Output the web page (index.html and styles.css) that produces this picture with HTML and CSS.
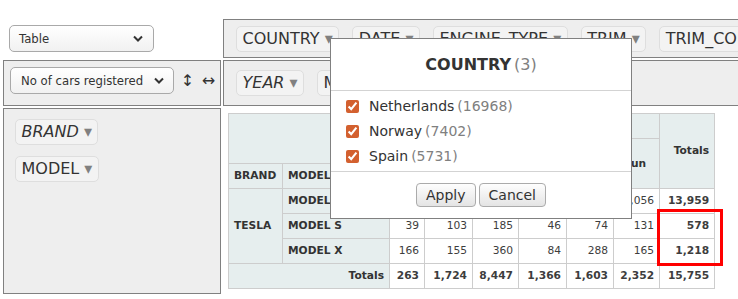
FILE: index.html
```
<!DOCTYPE html>
<html lang="en">
<head>
<meta charset="utf-8"/>
<title>Pivot Table</title>
<link rel="stylesheet" href="styles.css">
</head>
<body>
<div class="pivot-ui">
  <div class="renderer-cell">
    <div class="select renderer-select">
      <span>Table</span>
      <svg width="10" height="7" viewBox="0 0 10 7"><path d="M1 1.5 L5 5.5 L9 1.5" fill="none" stroke="#333" stroke-width="2"/></svg>
    </div>
  </div>
  <div class="axis-box unused">
    <span class="attr">COUNTRY<span class="triangle"> ▾</span></span>
    <span class="attr">DATE<span class="triangle"> ▾</span></span>
    <span class="attr">ENGINE_TYPE<span class="triangle"> ▾</span></span>
    <span class="attr">TRIM<span class="triangle"> ▾</span></span>
    <span class="attr">TRIM_CODE<span class="triangle"> ▾</span></span>
    <span class="attr">COLOR<span class="triangle"> ▾</span></span>
  </div>

  <div class="axis-box aggregator">
    <div class="select aggregator-select">
      <span>No of cars registered</span>
      <svg width="10" height="7" viewBox="0 0 10 7"><path d="M1 1.5 L5 5.5 L9 1.5" fill="none" stroke="#333" stroke-width="2"/></svg>
    </div>
    <span class="order">↕</span>
    <span class="order">↔</span>
  </div>
  <div class="axis-box cols">
    <span class="attr filtered">YEAR<span class="triangle"> ▾</span></span>
    <span class="attr">MONTH<span class="triangle"> ▾</span></span>
  </div>

  <div class="axis-box rows">
    <span class="attr filtered">BRAND<span class="triangle"> ▾</span></span>
    <span class="attr">MODEL<span class="triangle"> ▾</span></span>
  </div>
  <div class="renderer-area">
    <table class="pvt-table">
      <colgroup>
        <col style="width:54px"><col style="width:58px"><col style="width:49px">
        <col style="width:35px"><col style="width:48px"><col style="width:46px">
        <col style="width:48px"><col style="width:47px"><col style="width:46px">
        <col style="width:55px">
      </colgroup>
      <thead>
        <tr>
          <th colspan="2" rowspan="2"></th>
          <th>YEAR</th>
          <th class="col-label" colspan="6">2024</th>
          <th class="total-label" rowspan="3">Totals</th>
        </tr>
        <tr>
          <th>MONTH</th>
          <th class="col-label" rowspan="2">Jan</th>
          <th class="col-label" rowspan="2">Feb</th>
          <th class="col-label" rowspan="2">Mar</th>
          <th class="col-label" rowspan="2">Apr</th>
          <th class="col-label" rowspan="2">May</th>
          <th class="col-label" rowspan="2">Jun</th>
        </tr>
        <tr>
          <th>BRAND</th>
          <th>MODEL</th>
          <th></th>
        </tr>
      </thead>
      <tbody>
        <tr>
          <th rowspan="3">TESLA</th>
          <th colspan="2">MODEL 3</th>
          <td>58</td><td>1,466</td><td>7,902</td><td>1,236</td><td>1,241</td><td>2,056</td>
          <td class="total">13,959</td>
        </tr>
        <tr>
          <th colspan="2">MODEL S</th>
          <td>39</td><td>103</td><td>185</td><td>46</td><td>74</td><td>131</td>
          <td class="total">578</td>
        </tr>
        <tr>
          <th colspan="2">MODEL X</th>
          <td>166</td><td>155</td><td>360</td><td>84</td><td>288</td><td>165</td>
          <td class="total">1,218</td>
        </tr>
        <tr>
          <th colspan="3" class="total-label">Totals</th>
          <td class="total">263</td><td class="total">1,724</td><td class="total">8,447</td>
          <td class="total">1,366</td><td class="total">1,603</td><td class="total">2,352</td>
          <td class="total">15,755</td>
        </tr>
      </tbody>
    </table>
  </div>
</div>

<div class="filter-box">
  <h4>COUNTRY<span class="count">(3)</span></h4>
  <div class="check-list">
    <p><label><input type="checkbox" checked>Netherlands<span class="count">(16968)</span></label></p>
    <p><label><input type="checkbox" checked>Norway<span class="count">(7402)</span></label></p>
    <p><label><input type="checkbox" checked>Spain<span class="count">(5731)</span></label></p>
  </div>
  <p class="buttons">
    <button>Apply</button>
    <button>Cancel</button>
  </p>
</div>

<div class="highlight"></div>
</body>
</html>
```

FILE: styles.css
```
html, body {
    margin: 0;
    overflow: hidden;
    background: #fff;
}
body {
    font-family: 'DejaVu Sans', Verdana, sans-serif;
    color: #333;
    position: relative;
    width: 738px;
    height: 299px;
}
.pivot-ui {
    display: grid;
    grid-template-columns: 218px 760px;
    grid-template-rows: 39px 46px 186px;
    gap: 2px;
    margin: 19px 0 0 3px;
}
.axis-box {
    box-sizing: border-box;
    border: 1px solid gray;
    background: #eee;
    display: flex;
    align-items: center;
    white-space: nowrap;
    overflow: hidden;
}
.renderer-cell {
    display: flex;
    align-items: center;
    padding-left: 6px;
}
.unused, .cols {
    padding-left: 12px;
    gap: 13px;
}
.aggregator {
    align-items: flex-start;
    padding: 6px 0 0 6px;
}
.rows {
    flex-direction: column;
    align-items: flex-start;
    padding: 10px 0 0 11px;
    gap: 11px;
}
.renderer-area {
    padding: 5px;
}

/* fake native selects */
.select {
    box-sizing: border-box;
    height: 27px;
    display: flex;
    align-items: center;
    justify-content: space-between;
    border: 1px solid #a9a9a9;
    border-radius: 5px;
    background: linear-gradient(#fff, #f1f1f1);
    font-size: 11.7px;
    color: #333;
    padding: 0 10px 0 9px;
}
.renderer-select {
    width: 145px;
}
.aggregator-select {
    width: 164px;
    padding-left: 10px;
    padding-right: 9px;
}
.order {
    display: inline-block;
    width: 15px;
    margin-left: 6px;
    height: 27px;
    line-height: 27px;
    text-align: center;
    font-size: 16px;
    color: #333;
}

/* attribute pills */
.attr {
    box-sizing: border-box;
    display: inline-block;
    height: 26px;
    line-height: 24px;
    padding: 0 5.5px;
    background: #f3f3f3;
    border: 1px solid #dedede;
    border-radius: 5px;
    font-size: 16px;
    white-space: pre;
    flex: none;
}
.filtered {
    font-style: italic;
}
.triangle {
    color: grey;
    font-style: normal;
}

/* pivot table */
.pvt-table {
    table-layout: fixed;
    width: 487px;
    border-collapse: collapse;
    font-size: 10.67px;
    line-height: 14px;
    text-align: left;
}
.pvt-table th {
    background-color: #e6eeee;
    border: 1px solid #cdcdcd;
    padding: 5px;
    font-weight: bold;
    color: #333;
    white-space: nowrap;
    overflow: hidden;
}
.pvt-table td {
    color: #3d3d3d;
    background: #fff;
    border: 1px solid #cdcdcd;
    padding: 5px;
    text-align: right;
    vertical-align: top;
    white-space: nowrap;
}
.pvt-table .col-label {
    text-align: center;
}
.pvt-table .total-label {
    text-align: right;
}
.pvt-table .total {
    font-weight: bold;
}

/* filter popup */
.filter-box {
    position: absolute;
    left: 330px;
    top: 38px;
    width: 300px;
    border: 1px solid gray;
    background: #fff;
    text-align: center;
    z-index: 100;
}
.filter-box h4 {
    margin: 15px;
    font-size: 16px;
    line-height: 21px;
    color: #333;
}
.count {
    color: gray;
    font-weight: normal;
    margin-left: 3px;
}
.check-list {
    text-align: left;
    font-size: 14px;
    line-height: 20px;
    height: 80px;
    border-top: 1px solid lightgrey;
    border-bottom: 1px solid lightgrey;
    overflow: hidden;
}
.check-list p {
    margin: 5px;
}
.check-list label {
    display: flex;
    align-items: center;
}
.check-list input {
    margin: 0 10px;
    width: 13px;
    height: 13px;
    accent-color: #d3602f;
}
.buttons {
    display: flex;
    justify-content: center;
    gap: 3px;
    margin: 11px 0;
}
.buttons button {
    height: 24px;
    padding: 0 9px;
    font-family: 'DejaVu Sans', Verdana, sans-serif;
    font-size: 14px;
    color: #333;
    border: 1px solid #ababab;
    border-radius: 4px;
    background: linear-gradient(#fefefe, #e4e4e4);
}

.highlight {
    position: absolute;
    left: 657px;
    top: 209px;
    width: 60px;
    height: 51px;
    border: 3px solid #f00;
}
```
